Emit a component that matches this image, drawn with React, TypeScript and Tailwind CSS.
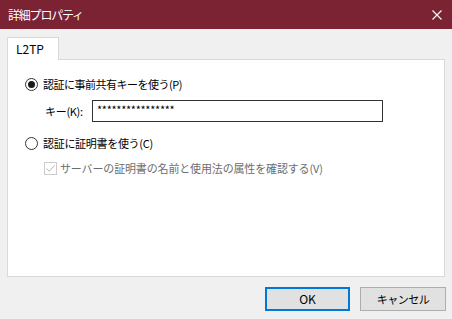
const font = { fontFamily: '"Noto Sans CJK JP", "Noto Sans", sans-serif' }

function Radio({ checked }: { checked: boolean }) {
  return (
    <span className="w-[13px] h-[13px] rounded-full border border-[#333333] bg-white flex items-center justify-center shrink-0">
      {checked && <span className="w-[7px] h-[7px] rounded-full bg-[#1a1a1a]" />}
    </span>
  )
}

export default function App() {
  return (
    <div
      className="w-[452px] h-[319px] bg-[#f0f0f0] flex flex-col text-[11px] tracking-[-0.3px] text-black"
      style={font}
    >
      {/* title bar */}
      <div className="h-[29px] bg-[#7b2233] flex items-center justify-between pl-[8px] pr-[10px] shrink-0">
        <span className="text-white text-[12px] tracking-[-1.2px]">詳細プロパティ</span>
        <svg width="10" height="10" viewBox="0 0 10 10">
          <path d="M0.5 0.5 L9.5 9.5 M9.5 0.5 L0.5 9.5" stroke="#ffffff" strokeWidth="1.1" />
        </svg>
      </div>

      <div className="flex flex-col px-[7px] pt-[8px]">
        {/* tab */}
        <div className="relative z-10 -mb-px w-[52px] h-[23px] border border-b-0 border-[#d9d9d9] bg-white pl-[8px] pt-[2px] text-[12px] tracking-normal">
          L2TP
        </div>

        {/* panel */}
        <div className="h-[218px] border border-[#d9d9d9] bg-white flex flex-col pl-[17px] pt-[16px]">
          <div className="flex items-center gap-[5px] h-[16px]">
            <Radio checked />
            <span className="tracking-[-0.5px]">認証に事前共有キーを使う(P)</span>
          </div>

          <div className="flex items-center mt-[8px] h-[22px]">
            <span className="w-[67px] pl-[20px]">キー(K):</span>
            <div className="w-[291px] h-[22px] border border-[#333333] flex items-center pl-[4px] pb-[3px] text-[11px] tracking-[-0.3px]">
              ****************
            </div>
          </div>

          <div className="flex items-center gap-[5px] h-[16px] mt-[13px]">
            <Radio checked={false} />
            <span>認証に証明書を使う(C)</span>
          </div>

          <div className="flex items-center gap-[3px] h-[16px] mt-[9px] pl-[19px] text-[#6d6d6d]">
            <span className="w-[13px] h-[13px] border border-[#cccccc] flex items-center justify-center shrink-0">
              <svg width="11" height="11" viewBox="0 0 11 11">
                <path d="M1.5 5.5 L4.2 8.2 L9.5 2.5" stroke="#b5b5b5" strokeWidth="1" fill="none" />
              </svg>
            </span>
            <span className="tracking-[-0.15px]">サーバーの証明書の名前と使用法の属性を確認する(V)</span>
          </div>
        </div>

        {/* buttons */}
        <div className="flex justify-end gap-[10px] mt-[10px] -mr-px">
          <button className="w-[85px] h-[24px] bg-[#e1e1e1] border-2 border-[#0078d7] text-[12px] tracking-normal flex items-center justify-center">
            OK
          </button>
          <button className="w-[86px] h-[24px] bg-[#e1e1e1] border border-[#adadad] text-[11px] tracking-[-0.5px] flex items-center justify-center">
            キャンセル
          </button>
        </div>
      </div>
    </div>
  )
}
